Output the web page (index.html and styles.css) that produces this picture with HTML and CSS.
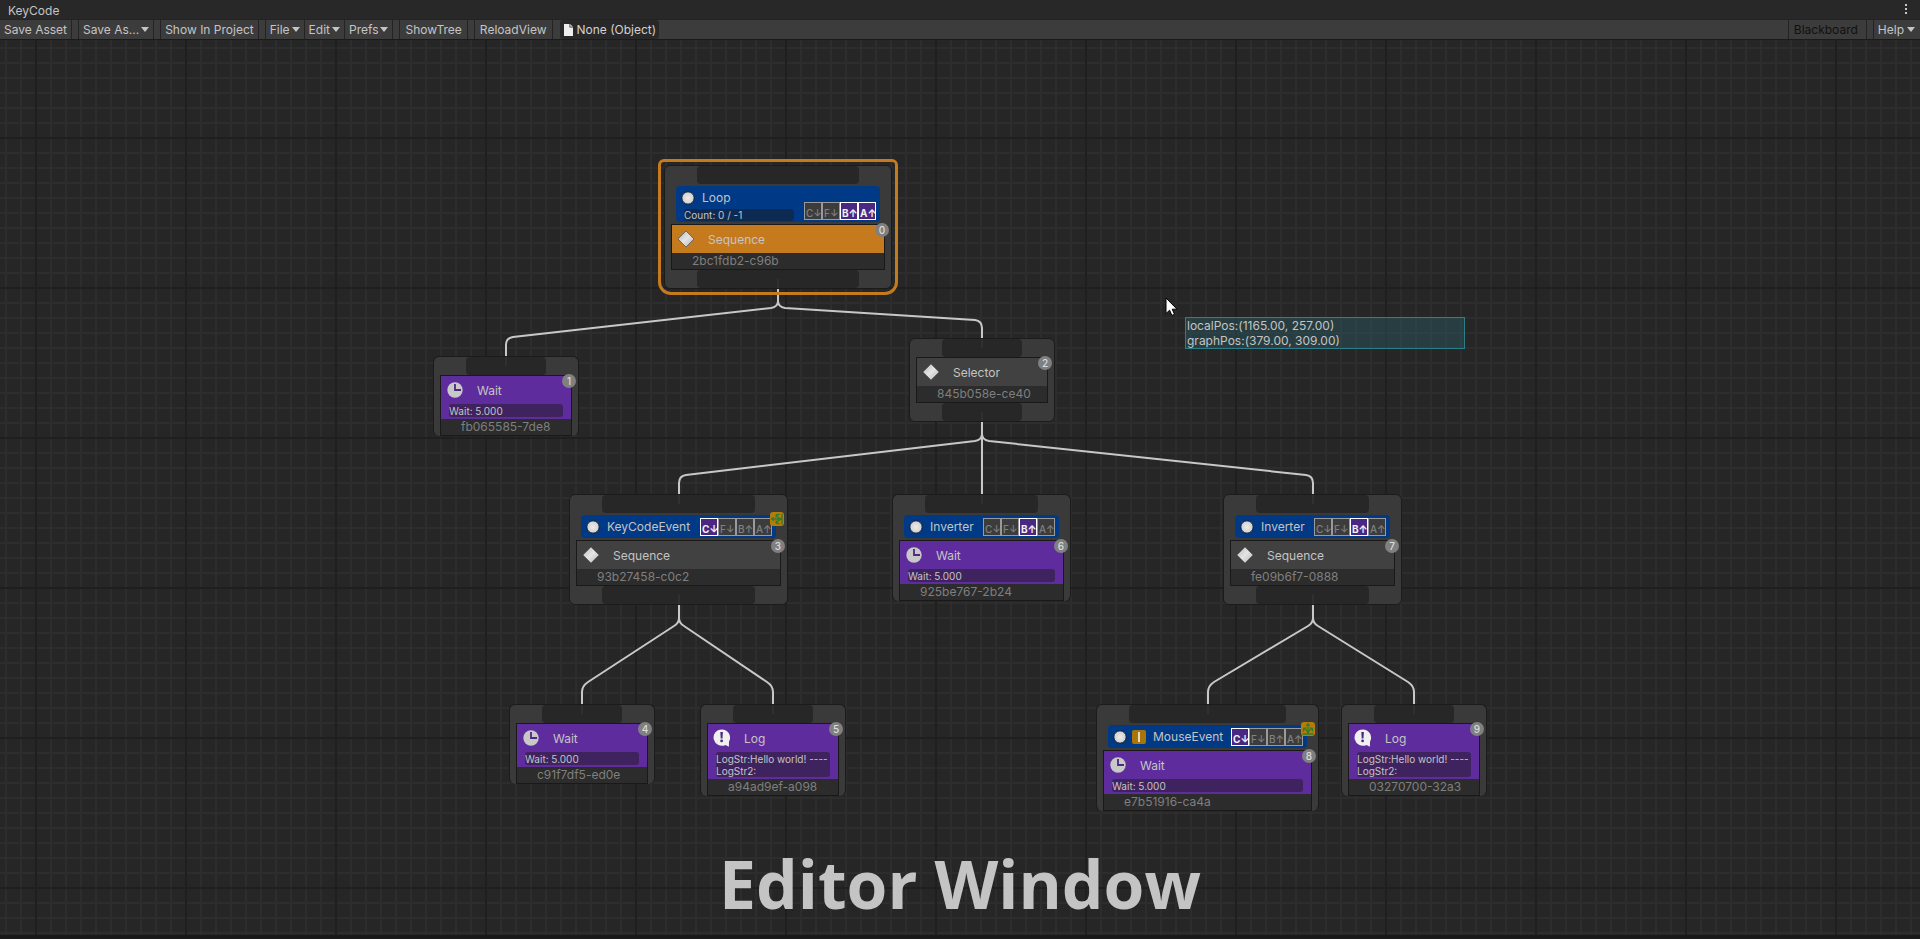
FILE: index.html
```html
<!DOCTYPE html>
<html lang="en">
<head>
<meta charset="utf-8">
<title>KeyCode</title>
<link rel="stylesheet" href="styles.css">
</head>
<body>
<svg class="defs" aria-hidden="true">
  <defs>
    <radialGradient id="ball"><stop offset="0" stop-color="#ececec"/><stop offset="1" stop-color="#cfcfcf"/></radialGradient>
    <linearGradient id="gem" x1="0" y1="0" x2="1" y2="1"><stop offset="0" stop-color="#b8b8b8"/><stop offset=".5" stop-color="#e4e4e4"/><stop offset="1" stop-color="#b4b4b4"/></linearGradient>
    <symbol id="i-ball" viewBox="0 0 14 14"><circle cx="7" cy="7" r="6.200" fill="url(#ball)" stroke="#10192a" stroke-width="1"/></symbol>
    <symbol id="i-gem" viewBox="0 0 18 18"><path d="M9 1 17 9 9 17 1 9Z" fill="url(#gem)" stroke="#6a6a6a" stroke-width="1"/></symbol>
    <symbol id="i-clock" viewBox="0 0 18 18"><circle cx="9" cy="9" r="7.7" fill="#c8c8c8"/><path d="M9 3v6h6" fill="none" stroke="#4f2785" stroke-width="1.8"/></symbol>
    <symbol id="i-log" viewBox="0 0 18 18"><path d="M8.600.4a8.200 8.200 0 1 0 3.900 15.500l3.400 1.900.1-5.200A8.200 8.200 0 0 0 8.600.4Z" fill="#f0f0f0"/><path d="M7.300 3h2.600l-.4 6.400H7.700Z" fill="#4a2780"/><circle cx="8.600" cy="11.900" r="1.400" fill="#4a2780"/></symbol>
    <symbol id="i-branch" viewBox="0 0 14 14"><path d="M12 1.500v11M12 7H1.500M12 7Q8 6.500 6.500 3M12 7Q8 7.500 6.500 11M9.500 2.500 6.300 2.600 6 5.500M9.500 11.500 6.300 11.400 6 8.500M3.800 5.200 1.500 7l2.300 1.800" fill="none" stroke="#2f7d32" stroke-width="1.300"/></symbol>
  </defs>
</svg>
<div class="window">
  <header class="tabbar">
    <h1 class="tab">KeyCode</h1>
    <button class="kebab" aria-label="Window menu"><svg width="4" height="12" viewBox="0 0 4 12"><path d="M1 1h2v2H1zM1 5h2v2H1zM1 9h2v2H1z" fill="#c8c8c8"/></svg></button>
  </header>
  <nav class="toolbar">
    <button class="tool first">Save Asset</button>
    <button class="tool gap">Save As...<i class="caret"></i></button>
    <button class="tool gap">Show In Project</button>
    <button class="tool gap">File<i class="caret"></i></button>
    <button class="tool">Edit<i class="caret"></i></button>
    <button class="tool">Prefs<i class="caret"></i></button>
    <button class="tool gap wide">ShowTree</button>
    <button class="tool gap wide">ReloadView</button>
    <button class="object"><svg width="9" height="12" viewBox="0 0 9 12"><path d="M0 0h5.500v3.500H9V12H0z" fill="#eee"/><path d="M6.200 0 9 2.800H6.200z" fill="#ccc"/></svg>None (Object)</button>
    <span class="fill"></span>
    <button class="tool board">Blackboard</button>
    <button class="tool gap help">Help<i class="caret"></i></button>
  </nav>
  <main class="canvas">
    <svg class="edges" width="1920" height="895" viewBox="0 40 1920 895" aria-hidden="true">
      <path d="M778 289V301Q778 307 771 308L513 337Q506 338 506 345V356"/>
      <path d="M778 289V301Q778 307 785 308L975 320Q982 321 982 328V338"/>
      <path d="M982 422V434Q982 440 975 441L686 475Q679 476 679 483V494"/>
      <path d="M982 422V494"/>
      <path d="M982 422V434Q982 440 989 441L1306 475Q1313 476 1313 483V494"/>
      <path d="M679 605V618Q679 623 674 626L588 682Q582 686 582 692V704"/>
      <path d="M679 605V618Q679 623 684 626L767 682Q773 686 773 692V704"/>
      <path d="M1313 605V618Q1313 623 1308 626L1214 682Q1208 686 1208 692V704"/>
      <path d="M1313 605V618Q1313 623 1318 626L1408 682Q1414 686 1414 692V704"/>
    </svg>

    <section class="node n0 selected">
      <div class="port in"></div>
      <div class="deco">
        <div class="deco-head"><svg class="ball"><use href="#i-ball"/></svg>Loop</div>
        <div class="deco-note">Count: 0 / -1</div>
        <div class="tags"><span>C↓</span><span>F↓</span><span class="on">B↑</span><span class="on">A↑</span></div>
      </div>
      <div class="body"><div class="main"><div class="head"><svg class="icon"><use href="#i-gem"/></svg>Sequence</div></div><div class="guid">2bc1fdb2-c96b</div><b class="num">0</b></div>
      <div class="port out"></div>
    </section>

    <section class="node n1 leaf">
      <div class="port in"></div>
      <div class="body"><div class="main"><div class="head"><svg class="icon"><use href="#i-clock"/></svg>Wait</div><div class="note">Wait: 5.000</div></div><div class="guid">fb065585-7de8</div><b class="num">1</b></div>
    </section>

    <section class="node n2">
      <div class="port in"></div>
      <div class="body"><div class="main"><div class="head"><svg class="icon"><use href="#i-gem"/></svg>Selector</div></div><div class="guid">845b058e-ce40</div><b class="num">2</b></div>
      <div class="port out"></div>
    </section>

    <section class="node n3">
      <div class="port in"></div>
      <div class="deco">
        <div class="deco-head"><svg class="ball"><use href="#i-ball"/></svg>KeyCodeEvent</div>
        <div class="tags"><span class="on">C↓</span><span>F↓</span><span>B↑</span><span>A↑</span></div>
        <svg class="abort"><use href="#i-branch"/></svg>
      </div>
      <div class="body"><div class="main"><div class="head"><svg class="icon"><use href="#i-gem"/></svg>Sequence</div></div><div class="guid">93b27458-c0c2</div><b class="num">3</b></div>
      <div class="port out"></div>
    </section>

    <section class="node n6 leaf">
      <div class="port in"></div>
      <div class="deco">
        <div class="deco-head"><svg class="ball"><use href="#i-ball"/></svg>Inverter</div>
        <div class="tags"><span>C↓</span><span>F↓</span><span class="on">B↑</span><span>A↑</span></div>
      </div>
      <div class="body"><div class="main"><div class="head"><svg class="icon"><use href="#i-clock"/></svg>Wait</div><div class="note">Wait: 5.000</div></div><div class="guid">925be767-2b24</div><b class="num">6</b></div>
    </section>

    <section class="node n7">
      <div class="port in"></div>
      <div class="deco">
        <div class="deco-head"><svg class="ball"><use href="#i-ball"/></svg>Inverter</div>
        <div class="tags"><span>C↓</span><span>F↓</span><span class="on">B↑</span><span>A↑</span></div>
      </div>
      <div class="body"><div class="main"><div class="head"><svg class="icon"><use href="#i-gem"/></svg>Sequence</div></div><div class="guid">fe09b6f7-0888</div><b class="num">7</b></div>
      <div class="port out"></div>
    </section>

    <section class="node n4 leaf">
      <div class="port in"></div>
      <div class="body"><div class="main"><div class="head"><svg class="icon"><use href="#i-clock"/></svg>Wait</div><div class="note">Wait: 5.000</div></div><div class="guid">c91f7df5-ed0e</div><b class="num">4</b></div>
    </section>

    <section class="node n5 leaf">
      <div class="port in"></div>
      <div class="body"><div class="main"><div class="head"><svg class="icon"><use href="#i-log"/></svg>Log</div><div class="note">LogStr:Hello world! ----<br>LogStr2:</div></div><div class="guid">a94ad9ef-a098</div><b class="num">5</b></div>
    </section>

    <section class="node n8 leaf">
      <div class="port in"></div>
      <div class="deco">
        <div class="deco-head"><svg class="ball"><use href="#i-ball"/></svg><svg class="inverse" viewBox="0 0 14 14"><path d="M7 2v10" stroke="#e4d9c4" stroke-width="2"/></svg>MouseEvent</div>
        <div class="tags"><span class="on">C↓</span><span>F↓</span><span>B↑</span><span>A↑</span></div>
        <svg class="abort down"><use href="#i-branch"/></svg>
      </div>
      <div class="body"><div class="main"><div class="head"><svg class="icon"><use href="#i-clock"/></svg>Wait</div><div class="note">Wait: 5.000</div></div><div class="guid">e7b51916-ca4a</div><b class="num">8</b></div>
    </section>

    <section class="node n9 leaf">
      <div class="port in"></div>
      <div class="body"><div class="main"><div class="head"><svg class="icon"><use href="#i-log"/></svg>Log</div><div class="note">LogStr:Hello world! ----<br>LogStr2:</div></div><div class="guid">03270700-32a3</div><b class="num">9</b></div>
    </section>

    <svg class="pointer" width="14" height="20" viewBox="0 0 14 20" aria-hidden="true"><path d="M1 1v15.500l3.600-3.300 2.300 5.200 2.600-1.100-2.300-5.100H12Z" fill="#fff" stroke="#000" stroke-width="1"/></svg>
    <div class="readout">localPos:(1165.00, 257.00)<br>graphPos:(379.00, 309.00)</div>
    <p class="caption">Editor Window</p>
  </main>
</div>
</body>
</html>
```
FILE: styles.css
```css
* { box-sizing: border-box; }
body {
  margin: 0;
  background: #191919;
  color: #c4c4c4;
  font: 12px/16px Inter, "Liberation Sans", sans-serif;
}
button {
  margin: 0;
  padding: 0;
  border: 0;
  background: none;
  color: inherit;
  font: inherit;
}
.defs { position: absolute; width: 0; height: 0; }
.window {
  display: flex;
  flex-direction: column;
  height: 100vh;
  padding-bottom: 4px;
}

/* Title tab and toolbar */
.tabbar {
  display: flex;
  justify-content: space-between;
  height: 19px;
  padding: 0 12px 0 8px;
  background: #282828;
}
.tab { margin: 0; padding-top: 3px; font-size: 12px; font-weight: 400; line-height: 16px; }
.kebab { display: flex; padding-top: 3px; }
.toolbar {
  display: flex;
  height: 21px;
  background: #3c3c3c;
  border-top: 1px solid #232323;
  border-bottom: 1px solid #1a1a1a;
}
.tool {
  display: flex;
  align-items: center;
  gap: 2px;
  padding: 0 4px;
  border-right: 1px solid #232323;
  white-space: nowrap;
}
.gap { margin-left: 6px; border-left: 1px solid #232323; }
.wide { padding: 0 5px; }
.caret {
  border: 4px solid transparent;
  border-top: 5px solid #c4c4c4;
  border-bottom: 0;
}
.object {
  display: flex;
  align-items: center;
  gap: 4px;
  margin-left: 7px;
  padding: 0 3px 0 4px;
  border-radius: 3px;
  background: #282828;
  color: #d2d2d2;
}
.fill { flex: 1; }
.board { padding: 0 8px 0 5px; border-left: 1px solid #232323; color: #111; }
.help { gap: 3px; border-right: 0; padding-right: 5px; }

/* Graph surface */
.canvas {
  position: relative;
  flex: 1;
  overflow: hidden;
  background-color: #262626;
  background-image:
    linear-gradient(90deg, #1f1f1f 2px, transparent 2px),
    linear-gradient(#1f1f1f 2px, transparent 2px),
    linear-gradient(90deg, #2d2d2d 2px, transparent 2px),
    linear-gradient(#2d2d2d 2px, transparent 2px);
  background-size: 150px 150px, 150px 150px, 15px 15px, 15px 15px;
  background-position: 35px 0, 0 97px, 5px 0, 0 7px;
}
.edges { position: absolute; top: 0; left: 0; fill: none; stroke: #c8c8c8; stroke-width: 2; }

/* Nodes */
.node {
  position: absolute;
  width: 146px;
  padding: 0 6px;
  border: 1px solid #1b1b1b;
  border-radius: 6px;
  background: #3a3a3a;
}
.leaf { border-bottom: 0; }
.n0 { left: 664px; top: 125px; width: 228px; }
.n1 { left: 433px; top: 316px; }
.n2 { left: 909px; top: 298px; }
.n3 { left: 569px; top: 454px; width: 219px; }
.n6 { left: 892px; top: 454px; width: 179px; }
.n7 { left: 1223px; top: 454px; width: 179px; }
.n4 { left: 509px; top: 664px; }
.n5 { left: 700px; top: 664px; }
.n8 { left: 1096px; top: 664px; width: 223px; }
.n9 { left: 1341px; top: 664px; }

.selected::before {
  content: "";
  position: absolute;
  inset: -7px;
  border: 3px solid #c67a1e;
  border-radius: 6px 6px 13px 13px;
}
.port {
  position: relative;
  height: 18px;
  margin: 0 26px;
  border-radius: 4px;
  background: #272727;
}
.leaf .in::after, .n2 .in::after, .n3 .in::after, .n7 .in::after, .out::after {
  content: "";
  position: absolute;
  left: 50%;
  width: 2px;
  height: 9px;
  margin-left: -1px;
  background: #303030;
}
.out::after { bottom: 0; }

.deco {
  position: relative;
  margin: 2px 5px;
  border-radius: 4px;
  background: #003a86;
}
.n0 .deco { padding-bottom: 1px; }
.deco-head {
  display: flex;
  align-items: center;
  gap: 7px;
  height: 23px;
  padding-left: 5px;
}
.ball { width: 14px; height: 14px; }
.inverse { width: 14px; height: 14px; margin-left: -2px; border-radius: 2px; background: #a97508; }
.deco-note {
  width: 110px;
  margin-left: 8px;
  border-radius: 3px;
  background: #0d2b52;
  font-size: 10px;
  line-height: 12px;
}
.tags {
  position: absolute;
  right: 4px;
  bottom: 2px;
  display: flex;
}
.tags span {
  width: 18px;
  height: 18px;
  padding-left: 1px;
  overflow: hidden;
  border: 1px solid #9a9a9a;
  background: #3c3c3c;
  color: #808080;
  font-size: 10px;
  font-weight: 500;
  line-height: 20px;
  white-space: nowrap;
}
.tags .on { border-color: #fff; background: #4b2784; color: #f0f0f0; font-weight: 700; }
.abort {
  position: absolute;
  top: -3px;
  right: -8px;
  width: 14px;
  height: 14px;
  border-radius: 3px;
  background: #b57d08;
}
.down { transform: rotate(90deg); }

.body {
  position: relative;
  border: 1px solid #191919;
  background: #2c2c2c;
}
.main { background: #414141; }
.leaf .main { padding-bottom: 2px; background: #5f2c9e; }
.selected .main { background: #c67a1e; }
.head {
  display: flex;
  align-items: center;
  gap: 13px;
  height: 28px;
  padding: 2px 0 0 5px;
}
.icon { width: 18px; height: 18px; margin-bottom: 2px; }
.note {
  margin: 0 8px;
  padding-top: 1px;
  border-radius: 3px;
  background: #3f235f;
  font-size: 10px;
  line-height: 12px;
  white-space: nowrap;
}
.guid { padding-left: 20px; color: #7f7f7f; line-height: 16px; }
.num {
  position: absolute;
  top: -2px;
  right: -5px;
  width: 14px;
  height: 14px;
  border-radius: 7px;
  background: #808080;
  color: #dcdcdc;
  font-size: 10px;
  font-weight: 500;
  line-height: 14px;
  text-align: center;
}

/* Overlays */
.pointer { position: absolute; left: 1165px; top: 257px; }
.readout {
  position: absolute;
  left: 1185px;
  top: 277px;
  width: 280px;
  padding: 0 1px;
  border: 1px solid #2a7f88;
  background: rgba(42, 90, 100, .45);
  line-height: 15px;
}
.caption {
  position: absolute;
  right: 0;
  bottom: 8px;
  left: 0;
  margin: 0;
  color: #c4c4c4;
  font: 700 66px/88px "Open Sans", "Noto Sans", sans-serif;
  text-align: center;
}
```
